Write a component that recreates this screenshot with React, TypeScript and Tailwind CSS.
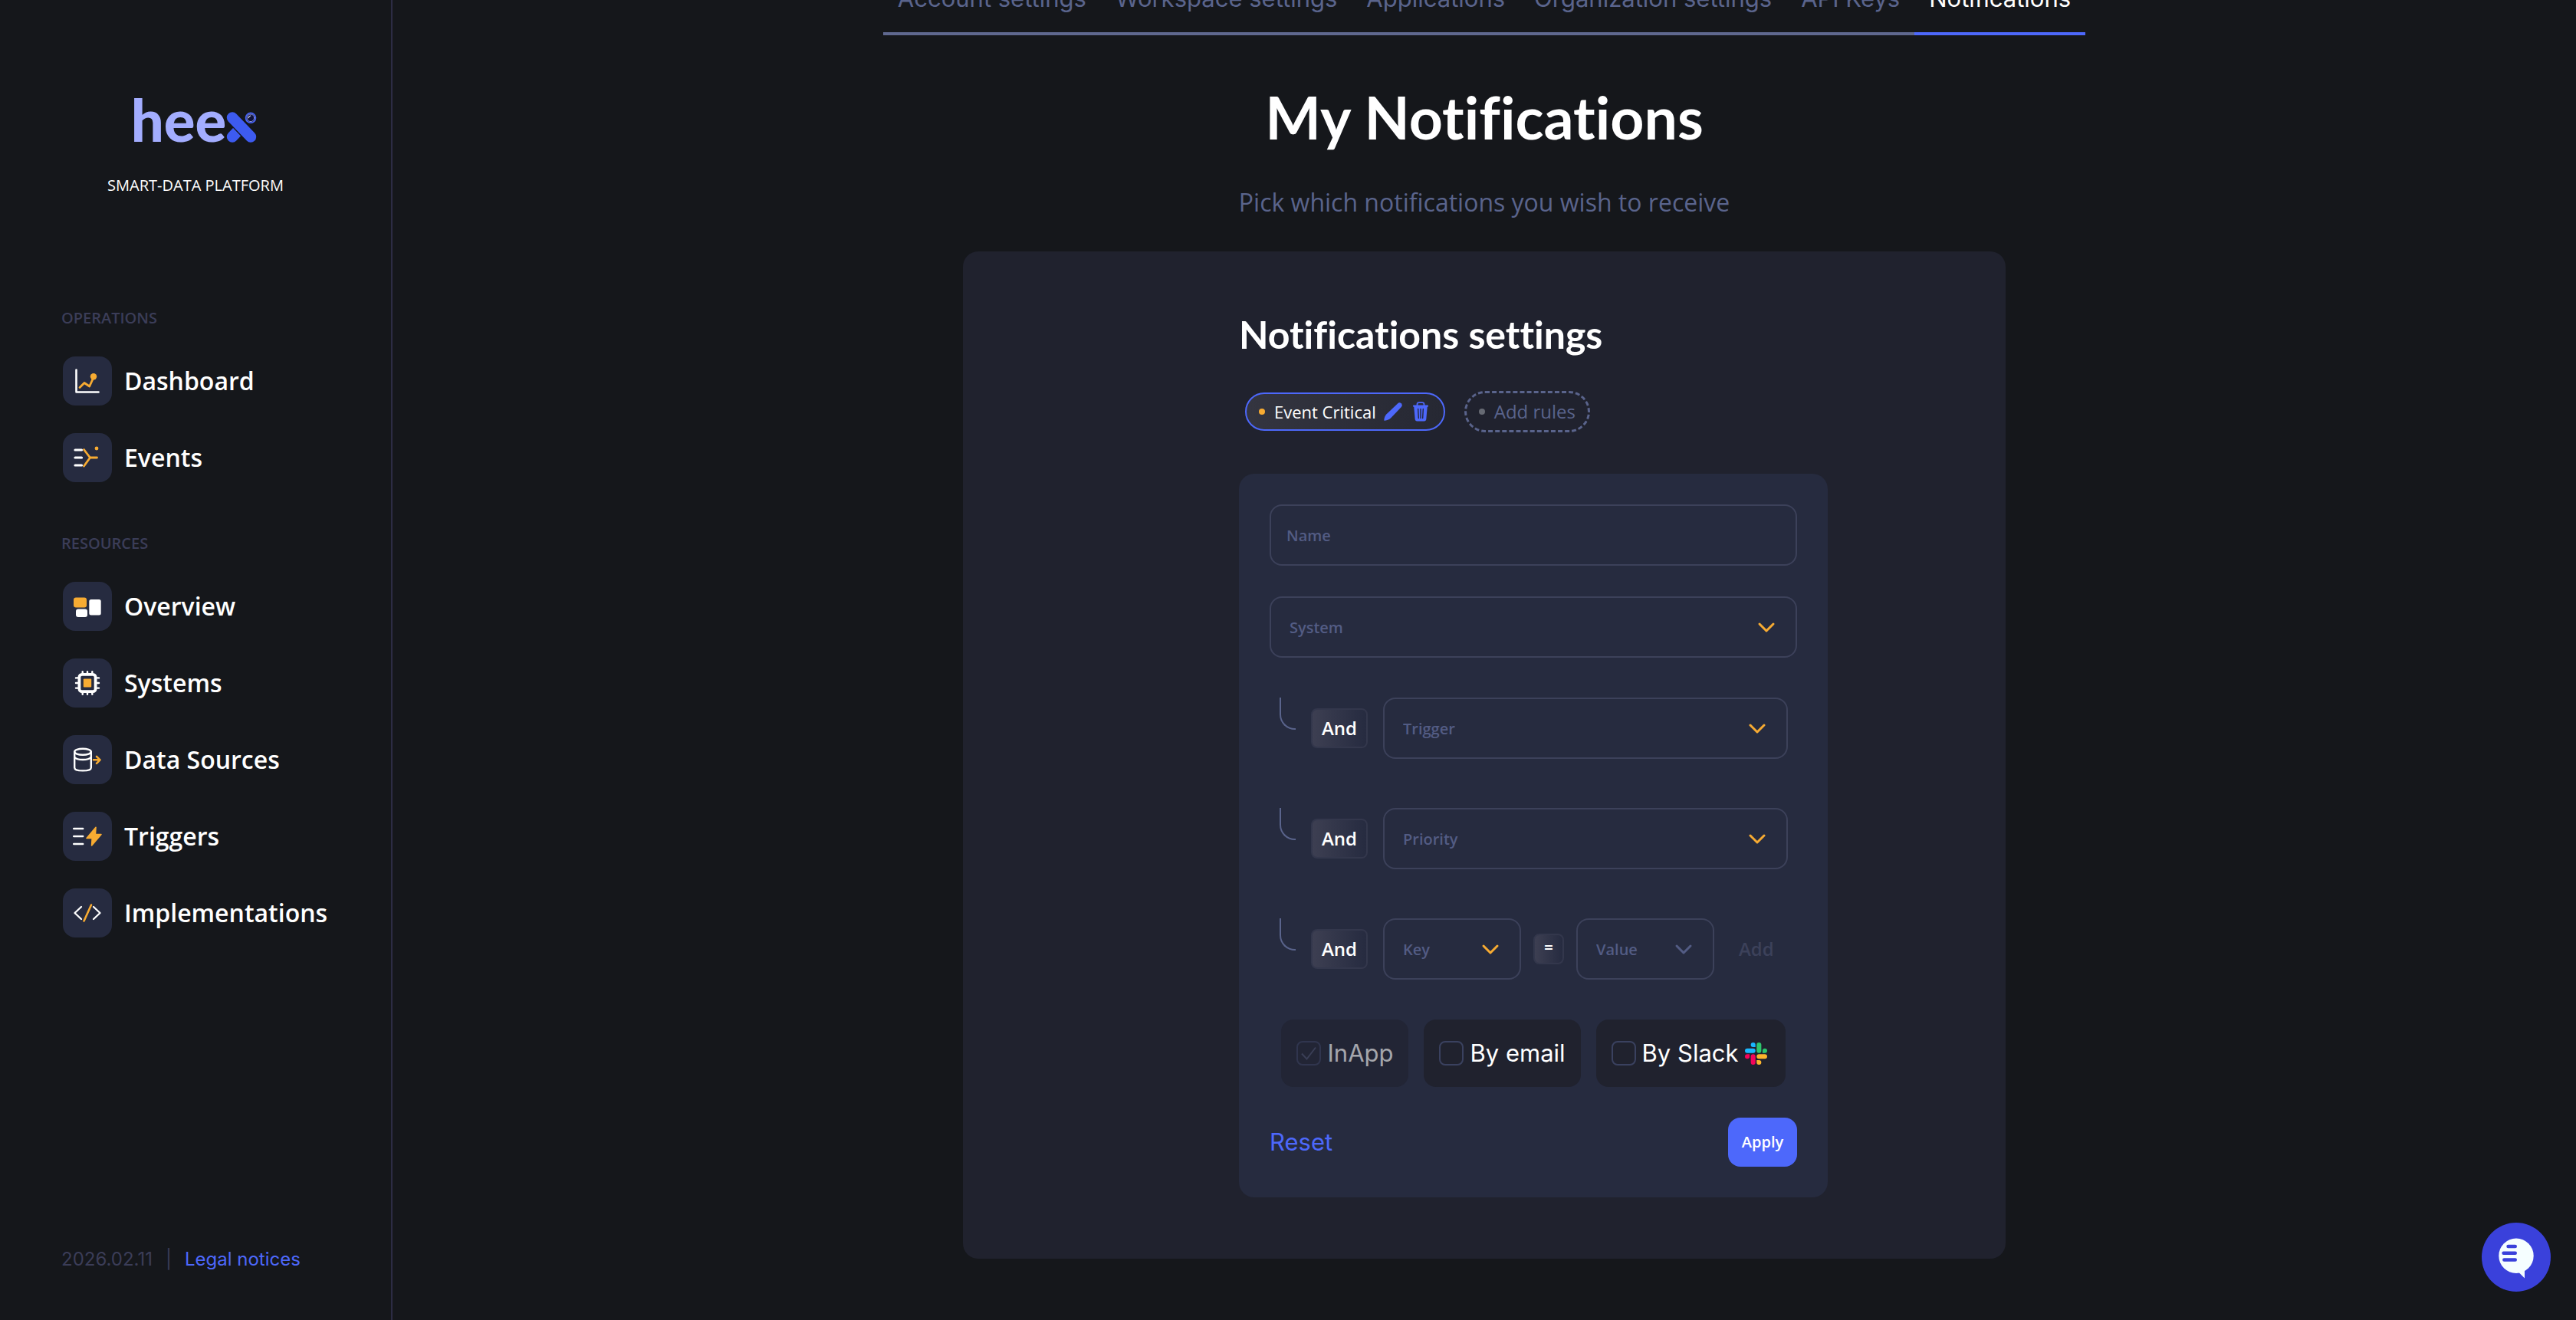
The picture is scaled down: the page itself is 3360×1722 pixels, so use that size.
import React from 'react';

const SANS = "font-['Open_Sans',sans-serif]";
const INTER = "font-['Inter',sans-serif]";
const TITLE = "font-['Lato',sans-serif]";

const DashboardIcon = () => (
  <svg viewBox="0 0 40 40" className="w-10 h-10" fill="none" strokeLinecap="round" strokeLinejoin="round">
    <path d="M5.5 5.5V34.5H34.5" stroke="#fff" strokeWidth="2.6" />
    <path d="M10 28.5l6-6 6.7 4.5 4.6-10" stroke="#f7ab32" strokeWidth="2.8" />
    <circle cx="28" cy="14.3" r="4.2" fill="#f7ab32" />
  </svg>
);

const EventsIcon = () => (
  <svg viewBox="0 0 40 40" className="w-10 h-10" fill="none" strokeLinecap="round" strokeLinejoin="round">
    <path d="M4 10h8.5M4 20h8.5M4 30h8.5" stroke="#fff" strokeWidth="3.2" />
    <path d="M15.5 9.5l8 10.5-8 11M23.5 20h9" stroke="#f7ab32" strokeWidth="2.8" />
    <circle cx="32" cy="8" r="2.4" fill="#f7ab32" />
  </svg>
);

const OverviewIcon = () => (
  <svg viewBox="0 0 40 40" className="w-10 h-10">
    <rect x="2" y="8.6" width="17" height="12.8" rx="3" fill="#f7ab32" />
    <rect x="5" y="23.6" width="15" height="10.3" rx="3" fill="#fff" />
    <rect x="22.3" y="11.1" width="15.4" height="20.3" rx="2.5" fill="#fff" />
  </svg>
);

const SystemsIcon = () => (
  <svg viewBox="0 0 40 40" className="w-10 h-10" fill="none" strokeLinecap="round">
    <rect x="9.4" y="8.8" width="21.2" height="22.4" rx="3.5" stroke="#fff" strokeWidth="3.8" />
    <path
      d="M13.7 5.2v3M20 5.2v3M26.3 5.2v3M13.7 31.8v3M20 31.8v3M26.3 31.8v3M5 13.4h3M5 20h3M5 26.6h3M32 13.4h3M32 20h3M32 26.6h3"
      stroke="#fff"
      strokeWidth="2.4"
    />
    <rect x="14.8" y="14.5" width="10.4" height="11" rx="1" fill="#f7ab32" />
  </svg>
);

const DataSourcesIcon = () => (
  <svg viewBox="0 0 40 40" className="w-10 h-10" fill="none" strokeLinecap="round" strokeLinejoin="round">
    <ellipse cx="14" cy="9.8" rx="10.8" ry="4" stroke="#fff" strokeWidth="2.4" />
    <path d="M3.2 9.8v20.6c0 2.4 2 4 10.8 4s10.8-1.6 10.8-4V9.8" stroke="#fff" strokeWidth="2.4" />
    <path d="M3.2 17c2 2.4 6 3 10.8 3s8.8-.6 10.8-3" stroke="#fff" strokeWidth="2.4" />
    <path d="M28 20.3h8.5M32 15.8l4.5 4.500-4.500 4.500" stroke="#f7ab32" strokeWidth="2.6" />
  </svg>
);

const TriggersIcon = () => (
  <svg viewBox="0 0 40 40" className="w-10 h-10" strokeLinecap="round" strokeLinejoin="round">
    <path d="M2.2 10h12M2.2 20h12M2.2 30h12" stroke="#fff" strokeWidth="2.4" />
    <path d="M31 8.3L19 22.4h7.2l-.6 9.6L38 17.5h-7.6z" fill="#f7ab32" stroke="#f7ab32" strokeWidth="1.6" />
  </svg>
);

const ImplementationsIcon = () => (
  <svg viewBox="0 0 40 40" className="w-10 h-10" fill="none" strokeLinecap="round" strokeLinejoin="round">
    <path d="M12 12L3.5 20l8.5 8M28 12l8.5 8-8.5 8" stroke="#fff" strokeWidth="2.3" />
    <path d="M25 9.5l-9.5 21" stroke="#f7ab32" strokeWidth="2.6" />
  </svg>
);

const LogoMark = () => (
  <svg viewBox="0 0 40 40" className="h-10 w-10" fill="none" strokeLinecap="round">
    <path d="M8 32.5L17 23" stroke="#3d5bf0" strokeWidth="14.4" />
    <path d="M8 7.5L32 32.5" stroke="#15171b" strokeWidth="17" />
    <path d="M8 7.5L32 32.5" stroke="#3d5bf0" strokeWidth="14.4" />
    <circle cx="32" cy="7.8" r="6.4" fill="#10123a" stroke="#4763f5" strokeWidth="1.8" />
    <circle cx="32" cy="7.8" r="4.8" stroke="#a3b0ff" strokeWidth=".8" />
    <path d="M29.3 7.6a3 3 0 0 1 2.5-2.6" stroke="#e8ecff" strokeWidth="1.2" />
  </svg>
);

const PencilIcon = () => (
  <svg viewBox="0 0 24 24" className="w-6 h-6" fill="#4d68fb">
    <path d="M.3 23.8C.2 20.5 1.4 17.5 3.5 15.2L18 1.500C19.500.1 21.200-.1 22.700 1.200c1.400 1.400 1.400 3.200.1 4.800L9.200 20.300C7 22.600 3.600 23.800.3 23.800z" />
  </svg>
);

const TrashIcon = () => (
  <svg viewBox="0 0 20 26" className="w-5 h-[26px]">
    <path d="M5.5 5V3.5C5.5 2 6.5 1.2 8 1.2h4c1.5 0 2.5.8 2.5 2.3V5" fill="none" stroke="#4d68fb" strokeWidth="1.8" />
    <path d="M1.2 4.5h17.6c.8 0 1.2.4 1.2 1.1 0 .8-.5 1.2-1.3 1.3L17.3 23c-.2 1.6-1.1 2.5-2.7 2.5H5.4c-1.6 0-2.5-.9-2.7-2.5L1.3 6.9C.5 6.8 0 6.4 0 5.6c0-.7.4-1.1 1.2-1.1z" fill="#4d68fb" />
    <path d="M6.7 9.5l.6 12M13.3 9.5l-.6 12M10 9.5v12" stroke="#21232f" strokeWidth="1.3" strokeLinecap="round" />
  </svg>
);

const SlackIcon = () => (
  <svg viewBox="0 0 24 24" className="w-[29px] h-[29px]">
    <path fill="#f5055a" d="M5.042 15.165a2.528 2.528 0 0 1-2.52 2.523A2.528 2.528 0 0 1 0 15.165a2.527 2.527 0 0 1 2.522-2.52h2.52v2.52zM6.313 15.165a2.527 2.527 0 0 1 2.521-2.52 2.527 2.527 0 0 1 2.521 2.52v6.313A2.528 2.528 0 0 1 8.834 24a2.528 2.528 0 0 1-2.521-2.522v-6.313z" />
    <path fill="#1ab8ff" d="M8.834 5.042a2.528 2.528 0 0 1-2.521-2.52A2.528 2.528 0 0 1 8.834 0a2.528 2.528 0 0 1 2.521 2.522v2.52H8.834zM8.834 6.313a2.528 2.528 0 0 1 2.521 2.521 2.528 2.528 0 0 1-2.521 2.521H2.522A2.528 2.528 0 0 1 0 8.834a2.528 2.528 0 0 1 2.522-2.521h6.312z" />
    <path fill="#2dc76d" d="M18.956 8.834a2.528 2.528 0 0 1 2.522-2.521A2.528 2.528 0 0 1 24 8.834a2.528 2.528 0 0 1-2.522 2.521h-2.522V8.834zM17.688 8.834a2.528 2.528 0 0 1-2.523 2.521 2.527 2.527 0 0 1-2.52-2.521V2.522A2.527 2.527 0 0 1 15.165 0a2.528 2.528 0 0 1 2.523 2.522v6.312z" />
    <path fill="#fdb52c" d="M15.165 18.956a2.528 2.528 0 0 1 2.523 2.522A2.528 2.528 0 0 1 15.165 24a2.527 2.527 0 0 1-2.52-2.522v-2.522h2.52zM15.165 17.688a2.527 2.527 0 0 1-2.52-2.523 2.526 2.526 0 0 1 2.52-2.52h6.313A2.527 2.527 0 0 1 24 15.165a2.528 2.528 0 0 1-2.522 2.523h-6.313z" />
  </svg>
);

const ChatIcon = () => (
  <svg viewBox="0 0 56 56" className="w-14 h-14">
    <circle cx="28" cy="26.2" r="22.7" fill="#f5feff" />
    <path d="M31 47.5l8 8V43z" fill="#f5feff" />
    <path d="M17.5 14h9.3M11.5 22.7h15.3M12.3 31.500h14.500" stroke="#3a41db" strokeWidth="4.4" strokeLinecap="round" />
  </svg>
);

const operations = [
  { label: 'Dashboard', icon: <DashboardIcon /> },
  { label: 'Events', icon: <EventsIcon /> },
];

const resources = [
  { label: 'Overview', icon: <OverviewIcon /> },
  { label: 'Systems', icon: <SystemsIcon /> },
  { label: 'Data Sources', icon: <DataSourcesIcon /> },
  { label: 'Triggers', icon: <TriggersIcon /> },
  { label: 'Implementations', icon: <ImplementationsIcon /> },
];

const tabs = ['Account settings', 'Workspace settings', 'Applications', 'Organization settings', 'API Keys', 'Notifications'];

interface MenuProps {
  title: string;
  items: { label: string; icon: React.ReactNode }[];
}

const Menu = ({ title, items }: MenuProps) => (
  <div>
    <h2 className="text-[20px] leading-[28px] font-semibold text-[#3b3d58]">{title}</h2>
    <ul className="mt-9 flex flex-col gap-9 pl-0.5">
      {items.map((item) => (
        <li key={item.label}>
          <a href="#" className="flex items-center gap-4 text-[32px] leading-[44px] font-semibold text-white">
            <span className="flex h-16 w-16 items-center justify-center rounded-2xl bg-[#262b40]">{item.icon}</span>
            {item.label}
          </a>
        </li>
      ))}
    </ul>
  </div>
);

const Sidebar = () => (
  <aside className="flex w-[512px] shrink-0 flex-col border-r-2 border-[#2c2c44] pt-[116px] pb-[63px]">
    <a href="#" aria-label="heex" className="flex h-[70px] items-end justify-center pr-1">
      <span className={`${TITLE} text-[76px] leading-[60px] font-black text-[#a3adff]`}>hee</span>
      <LogoMark />
    </a>
    <p className="mt-[42px] text-center text-[20px] leading-[28px] text-white">SMART-DATA PLATFORM</p>

    <nav className="mt-[145px] flex flex-col gap-[66px] px-20">
      <Menu title="OPERATIONS" items={operations} />
      <Menu title="RESOURCES" items={resources} />
    </nav>

    <footer className={`${INTER} mt-auto flex gap-[17px] px-20 text-[24px] leading-[32px] text-[#3b3d58]`}>
      <span>2026.02.11</span>
      <span>|</span>
      <a href="#" className="text-[#4d68fb]">Legal notices</a>
    </footer>
  </aside>
);

const AndBadge = () => (
  <span className="flex h-[52px] w-[74px] items-center justify-center rounded-lg border-2 border-[#33374c] bg-linear-to-r from-[#3d3f52] to-[#262b40] text-[24px] leading-[32px] font-semibold text-white">
    And
  </span>
);

const Connector = () => (
  <span className="h-[42px] w-[21px] self-start rounded-bl-[20px] border-b-2 border-l-2 border-[#5a648c]" />
);

interface SelectFieldProps {
  label: string;
  className: string;
  disabled?: boolean;
}

const SelectField = ({ label, className, disabled }: SelectFieldProps) => (
  <div className={`grid items-center ${className}`}>
    <select
      aria-label={label}
      disabled={disabled}
      defaultValue=""
      className="col-start-1 row-start-1 h-20 w-full appearance-none rounded-2xl border-2 border-[#3c415a] bg-transparent px-6 pt-0.5 text-[20px] font-semibold text-[#535c84] opacity-100"
    >
      <option value="">{label}</option>
    </select>
    <svg
      viewBox="0 0 24 16"
      className={`pointer-events-none col-start-1 row-start-1 mr-7 h-4 w-6 justify-self-end ${disabled ? 'text-[#535c84]' : 'text-[#f7ab32]'}`}
      fill="none"
      stroke="currentColor"
      strokeWidth="3"
      strokeLinecap="round"
      strokeLinejoin="round"
    >
      <path d="M3 4l9 9 9-9" />
    </svg>
  </div>
);

interface ChannelProps {
  label: string;
  icon?: React.ReactNode;
  locked?: boolean;
}

const Channel = ({ label, icon, locked }: ChannelProps) => (
  <label
    className={`${INTER} flex h-[88px] items-center rounded-2xl px-5 text-[31px] leading-[40px] text-white ${locked ? 'bg-[#20222e]/60' : 'bg-[#20222e]'}`}
  >
    <span className={`mr-2 grid ${locked ? 'opacity-60' : ''}`}>
      <input
        type="checkbox"
        defaultChecked={locked}
        disabled={locked}
        className="peer col-start-1 row-start-1 h-8 w-8 appearance-none rounded-lg border-2 border-[#3a415f]"
      />
      <svg
        viewBox="0 0 32 32"
        className="pointer-events-none invisible col-start-1 row-start-1 h-8 w-8 peer-checked:visible"
        fill="none"
        stroke="#4a506c"
        strokeWidth="2"
      >
        <path d="M7 16.5l6.5 7L25 8.5" />
      </svg>
    </span>
    <span className={locked ? 'text-white/60' : ''}>{label}</span>
    {icon && <span className="mr-1 ml-2">{icon}</span>}
  </label>
);

const RuleForm = () => (
  <form className="mt-[54px] w-[768px] rounded-[20px] bg-[#262b3f] p-10" onSubmit={(e) => e.preventDefault()}>
    <input
      type="text"
      aria-label="Name"
      placeholder="Name"
      className="block h-20 w-full rounded-2xl border-2 border-[#3c415a] bg-transparent px-5 text-[20px] font-semibold text-white placeholder:text-[#535c84]"
    />
    <SelectField label="System" className="mt-10" />

    <div className="mt-[52px] flex flex-col gap-16 pr-3 pl-[13px]">
      {['Trigger', 'Priority'].map((label) => (
        <div key={label} className="flex items-center gap-5">
          <Connector />
          <AndBadge />
          <SelectField label={label} className="flex-1" />
        </div>
      ))}
      <div className="flex items-center gap-5">
        <Connector />
        <AndBadge />
        <div className="flex flex-1 items-center gap-4">
          <SelectField label="Key" className="w-[180px]" />
          <span className="flex h-10 w-10 items-center justify-center rounded-lg border-2 border-[#33374c] bg-linear-to-r from-[#3d3f52] to-[#262b40] pb-1 text-[20px] leading-[28px] font-bold text-white">
            =
          </span>
          <SelectField label="Value" className="w-[180px]" disabled />
          <button type="button" className="ml-4 text-[24px] leading-[32px] font-semibold text-[#3c415a]">Add</button>
        </div>
      </div>
    </div>

    <div className="mt-[52px] flex justify-center gap-5">
      <Channel label="InApp" locked />
      <Channel label="By email" />
      <Channel label="By Slack" icon={<SlackIcon />} />
    </div>

    <div className="mt-10 flex items-center justify-between">
      <button type="reset" className={`${INTER} text-[31px] leading-[40px] text-[#4d68fb]`}>Reset</button>
      <button type="submit" className="h-16 w-[90px] rounded-2xl bg-[#4d68fb] text-[20px] leading-[28px] font-semibold text-white">
        Apply
      </button>
    </div>
  </form>
);

export default function App() {
  return (
    <div className={`${SANS} flex min-h-screen bg-[#15171b]`}>
      <Sidebar />

      <main className="flex flex-1 flex-col items-center pb-20">
        <nav className={`${INTER} flex h-[46px] text-[31px] leading-[40px]`}>
          {tabs.map((tab) => (
            <a
              key={tab}
              href="#"
              className={`flex items-end border-b-4 px-[19px] pb-6 whitespace-nowrap ${
                tab === 'Notifications' ? 'border-[#4d68fb] text-white' : 'border-[#5f688f] text-[#5a648c]'
              }`}
            >
              {tab}
            </a>
          ))}
        </nav>

        <h1 className={`${TITLE} mt-[58px] text-[77px] leading-[96px] font-bold text-white [font-variant-ligatures:none]`}>
          My Notifications
        </h1>
        <p className="mt-[42px] text-[32px] leading-[44px] text-[#5a648c]">Pick which notifications you wish to receive</p>

        <section className="mt-[42px] w-[1360px] rounded-[20px] bg-[#20222e] pt-[76px] pb-20">
          <div className="mx-auto w-[640px]">
            <h2 className={`${TITLE} text-[50px] leading-[64px] font-bold text-white [font-variant-ligatures:none]`}>
              Notifications settings
            </h2>

            <div className="mt-[42px] flex items-center gap-[25px] pl-2">
              <div className="flex h-[50px] items-center rounded-full border-2 border-[#4d68fb] bg-linear-to-r from-[#343540] to-[#262833] pr-5 pl-4">
                <span className="h-2 w-2 rounded-full bg-[#f7ab32]" />
                <span className="ml-3 text-[22px] leading-[32px] text-white">Event Critical</span>
                <button type="button" aria-label="Edit rule" className="ml-2.5">
                  <PencilIcon />
                </button>
                <button type="button" aria-label="Delete rule" className="ml-3.5">
                  <TrashIcon />
                </button>
              </div>
              <button
                type="button"
                className="flex h-[54px] items-center gap-3 rounded-full border-3 border-dashed border-[#5a648c] px-4 text-[24px] leading-[32px] text-[#5a648c]"
              >
                <span className="h-2 w-2 rounded-full bg-[#666a73]" />
                Add rules
              </button>
            </div>

            <RuleForm />
          </div>
        </section>
      </main>

      <button
        type="button"
        aria-label="Open chat"
        className="fixed right-[33px] bottom-[37px] flex h-[90px] w-[90px] items-center justify-center rounded-full bg-[#3a41db]"
      >
        <ChatIcon />
      </button>
    </div>
  );
}
